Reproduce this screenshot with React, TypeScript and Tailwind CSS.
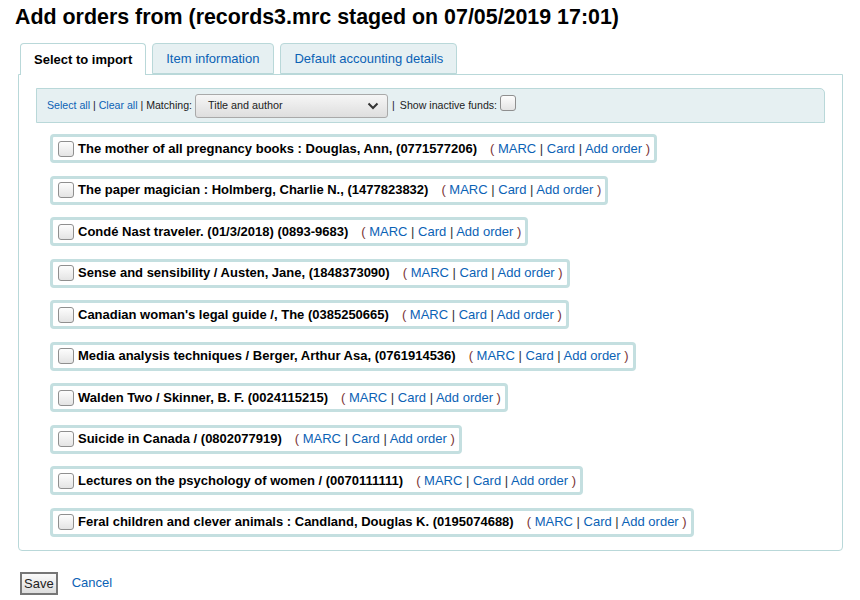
import React from 'react';

const RECORDS = [
  'The mother of all pregnancy books : Douglas, Ann, (0771577206)',
  'The paper magician : Holmberg, Charlie N., (1477823832)',
  'Condé Nast traveler. (01/3/2018) (0893-9683)',
  'Sense and sensibility / Austen, Jane, (1848373090)',
  "Canadian woman's legal guide /, The (0385250665)",
  'Media analysis techniques / Berger, Arthur Asa, (0761914536)',
  'Walden Two / Skinner, B. F. (0024115215)',
  'Suicide in Canada / (0802077919)',
  'Lectures on the psychology of women / (0070111111)',
  'Feral children and clever animals : Candland, Douglas K. (0195074688)',
];

function Checkbox() {
  return (
    <span className="inline-block w-4 h-4 rounded-[3px] border border-[#8f8f8f] bg-gradient-to-b from-[#fdfdfd] to-[#e4e4e4] shrink-0" />
  );
}

export default function App() {
  return (
    <div className="min-h-[600px] bg-white px-[15px] pt-[4px] font-['Liberation_Sans',Arial,sans-serif] text-black">
      {/* Page heading */}
      <h1 className="text-[21.4px] leading-[27px] font-bold">
        Add orders from (records3.mrc staged on 07/05/2019 17:01)
      </h1>

      {/* Tabs */}
      <div className="mt-[12px] pl-[5px] flex gap-[6px] relative z-10">
        <div className="h-[32px] px-[13px] flex items-center bg-white border border-[#b9d8d9] border-b-0 rounded-t-[4px] text-[13px] font-bold">
          Select to import
        </div>
        <div className="h-[31px] pl-[13px] pr-[14px] flex items-center bg-[#e6f0f2] border border-[#b9d8d9] rounded-t-[4px] text-[13px] text-[#0b62b5]">
          Item information
        </div>
        <div className="h-[31px] px-[13px] flex items-center bg-[#e6f0f2] border border-[#b9d8d9] rounded-t-[4px] text-[13px] text-[#0b62b5]">
          Default accounting details
        </div>
      </div>

      {/* Panel */}
      <div className="ml-[3px] w-[825px] -mt-px border border-[#b9d8d9] rounded-b-[4px] px-[17px] pt-[13px] pb-[13px]">
        {/* Toolbar */}
        <div className="h-[35px] flex items-center bg-[#e6f0f2] border border-[#b9d8d9] rounded-tr-[5px] pl-[10px] text-[10.6px] text-[#222] whitespace-pre">
          <span>
            <a className="text-[#0b62b5]">Select all</a> | <a className="text-[#0b62b5]">Clear all</a> | Matching:
          </span>
          <div className="ml-[3px] w-[193px] h-[24px] flex items-center justify-between pl-[12px] pr-[8px] border border-[#a9a9a9] rounded-[3px] bg-gradient-to-b from-[#f6f6f6] to-[#dedede] text-[10.8px] text-[#222]">
            <span>Title and author</span>
            <svg width="12" height="8" viewBox="0 0 12 8" fill="none">
              <path d="M1.5 1.5 L6 6 L10.5 1.5" stroke="#333" strokeWidth="2" />
            </svg>
          </div>
          <span className="ml-[4px] mr-[5px]">|</span>
          <span>Show inactive funds:</span>
          <span className="ml-[3px]"><Checkbox /></span>
        </div>

        {/* Staged records */}
        <div className="mt-[11px] ml-[14px] flex flex-col items-start gap-[12.5px]">
          {RECORDS.map((title) => (
            <div
              key={title}
              className="h-[29px] inline-flex items-center gap-[4px] border-[3px] border-[#c4dfe0] rounded-[4px] pl-[5px] pr-[4px] text-[13px]"
            >
              <Checkbox />
              <span className="font-bold">{title}</span>
              <span className="ml-[9px] text-[#0b62b5]">
                <span className="text-[#7a3434]">( </span>MARC<span className="text-[#333]"> | </span>Card
                <span className="text-[#333]"> | </span>Add order<span className="text-[#7a3434]"> )</span>
              </span>
            </div>
          ))}
        </div>
      </div>

      {/* Actions */}
      <div className="mt-[21px] ml-[5px] flex items-center gap-[14px] text-[13px]">
        <button className="h-[23px] px-[2px] border-2 border-[#767676] bg-gradient-to-b from-[#fafafa] to-[#dddddd] text-[#222]">
          Save
        </button>
        <a className="text-[#0b62b5]">Cancel</a>
      </div>
    </div>
  );
}
